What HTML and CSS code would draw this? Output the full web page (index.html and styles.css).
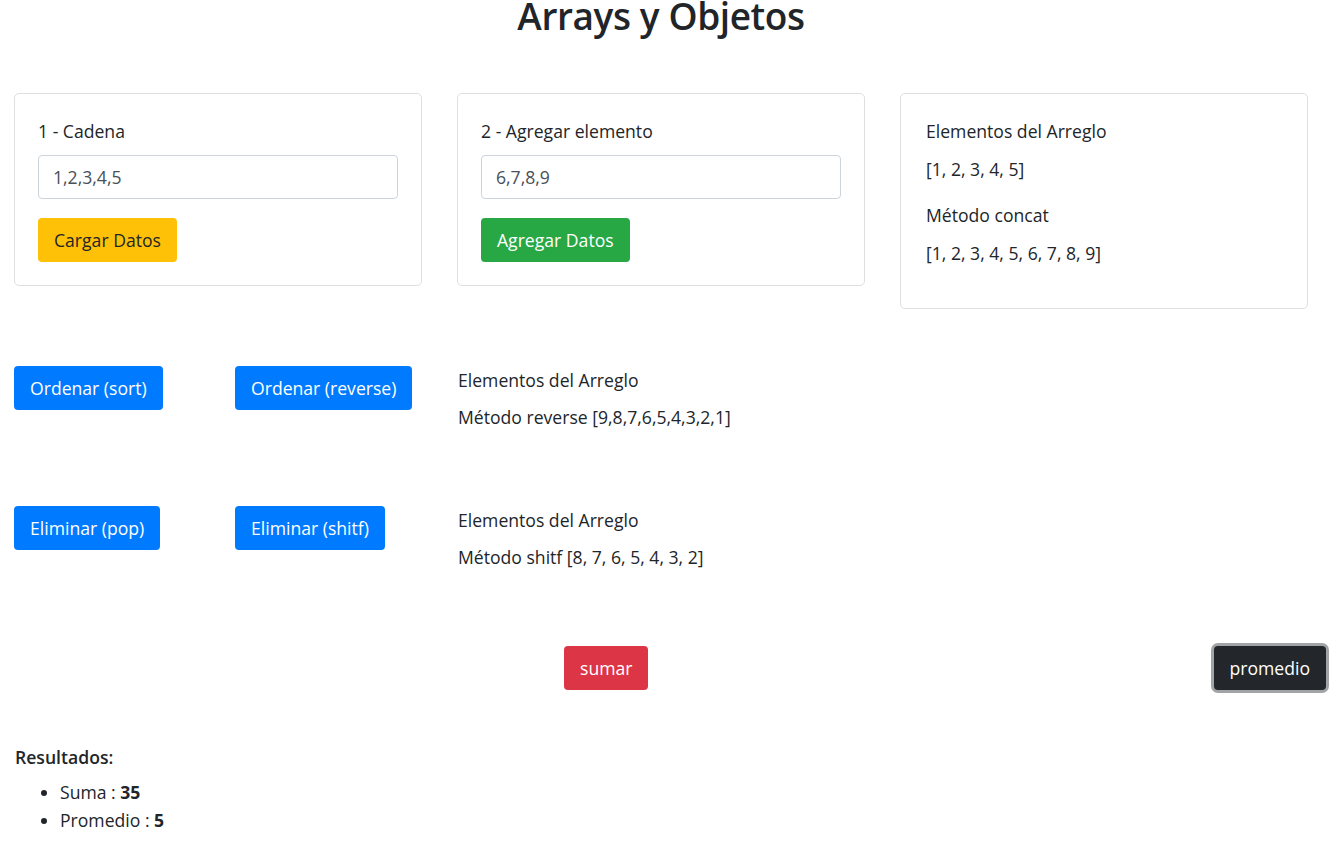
FILE: index.html
```html
<!DOCTYPE html>
<html lang="es">
<head>
    <meta charset="UTF-8">
    <meta name="viewport" content="width=device-width, initial-scale=1.0">
    <title>Arrays y Objetos</title>
    <link rel="stylesheet" href="styles.css">
</head>
<body>

    <div class="page">
        <h1 class="title">Arrays y Objetos</h1>

        <!-- Carga y concatenación -->
        <div class="cards">
            <div class="card">
                <label class="card-label" for="cadena">1 - Cadena</label>
                <input class="field" id="cadena" type="text" value="1,2,3,4,5">
                <button class="btn btn-warning">Cargar Datos</button>
            </div>
            <div class="card">
                <label class="card-label" for="agregar">2 - Agregar elemento</label>
                <input class="field" id="agregar" type="text" value="6,7,8,9">
                <button class="btn btn-success">Agregar Datos</button>
            </div>
            <div class="card card-output">
                <p class="out-title">Elementos del Arreglo</p>
                <p class="out-value">[1, 2, 3, 4, 5]</p>
                <p class="out-title">Método concat</p>
                <p class="out-value">[1, 2, 3, 4, 5, 6, 7, 8, 9]</p>
            </div>
        </div>

        <!-- Ordenar -->
        <div class="action-row">
            <div><button class="btn btn-primary">Ordenar (sort)</button></div>
            <div><button class="btn btn-primary">Ordenar (reverse)</button></div>
            <div class="action-result">
                <p>Elementos del Arreglo</p>
                <p>Método reverse [9,8,7,6,5,4,3,2,1]</p>
            </div>
        </div>

        <!-- Eliminar -->
        <div class="action-row">
            <div><button class="btn btn-primary">Eliminar (pop)</button></div>
            <div><button class="btn btn-primary">Eliminar (shitf)</button></div>
            <div class="action-result">
                <p>Elementos del Arreglo</p>
                <p>Método shitf [8, 7, 6, 5, 4, 3, 2]</p>
            </div>
        </div>

        <div class="calc-row">
            <button class="btn btn-danger">sumar</button>
            <button class="btn btn-dark focused">promedio</button>
        </div>

        <div class="results">
            <p class="results-title">Resultados:</p>
            <ul class="results-list">
                <li>Suma : <strong>35</strong></li>
                <li>Promedio : <strong>5</strong></li>
            </ul>
        </div>
    </div>

</body>
</html>
```

FILE: styles.css
```css
* {
    margin: 0;
    padding: 0;
    box-sizing: border-box;
}

body {
    font-family: 'Open Sans', 'Noto Sans', sans-serif;
    font-size: 17.6px;
    line-height: 26px;
    color: #212529;
    background: #fff;
}

.page {
    width: 1340px;
    padding: 0 32px 0 14px;
}

.title {
    font-size: 37px;
    font-weight: 600;
    line-height: 32px;
    letter-spacing: -0.4px;
    text-align: center;
}

/* Tarjetas */
.cards {
    margin-top: 61px;
    display: grid;
    grid-template-columns: 408px 408px 408px;
    column-gap: 35px;
    align-items: start;
}

.card {
    border: 1px solid rgba(0, 0, 0, 0.125);
    border-radius: 5px;
    padding: 24px 23px 23px;
    display: flex;
    flex-direction: column;
    align-items: flex-start;
}

.card-label {
    margin-bottom: 11px;
}

.field {
    width: 100%;
    height: 44px;
    padding: 0 14px;
    font: inherit;
    color: #495057;
    border: 1px solid #ced4da;
    border-radius: 4px;
    outline: none;
}

.card .btn {
    margin-top: 19px;
}

.card-output {
    padding-left: 25px;
}

.out-title {
    margin-bottom: 12px;
}

.out-value {
    margin-bottom: 20px;
}

.out-value:last-child {
    margin-bottom: 19px;
}

/* Botones */
.btn {
    font: inherit;
    line-height: 26px;
    padding: 8px 15px;
    border: 1px solid transparent;
    border-radius: 4px;
    color: #fff;
    cursor: pointer;
}

.btn-warning {
    background: #ffc107;
    color: #212529;
}

.btn-success {
    background: #28a745;
}

.btn-primary {
    background: #007bff;
}

.btn-danger {
    background: #dc3545;
}

.btn-dark {
    background: #23272b;
}

.btn-dark.focused {
    box-shadow: 0 0 0 3px rgba(130, 134, 138, 0.75);
}

/* Filas de acciones */
.action-row {
    margin-top: 57px;
    display: grid;
    grid-template-columns: 221px 222px 1fr;
}

.action-row + .action-row {
    margin-top: 76px;
}

.action-result {
    padding-top: 1px;
    padding-left: 1px;
}

.action-result p + p {
    margin-top: 11px;
}

.calc-row {
    margin-top: 76px;
    display: flex;
    align-items: center;
    padding-left: 550px;
    margin-right: -18px;
}

.calc-row .btn-dark {
    margin-left: auto;
}

/* Resultados */
.results {
    margin-top: 54px;
    padding-left: 1px;
}

.results-title {
    font-weight: 600;
}

.results-list {
    margin-top: 8px;
    padding-left: 45px;
}

.results-list li {
    line-height: 28px;
}
```
